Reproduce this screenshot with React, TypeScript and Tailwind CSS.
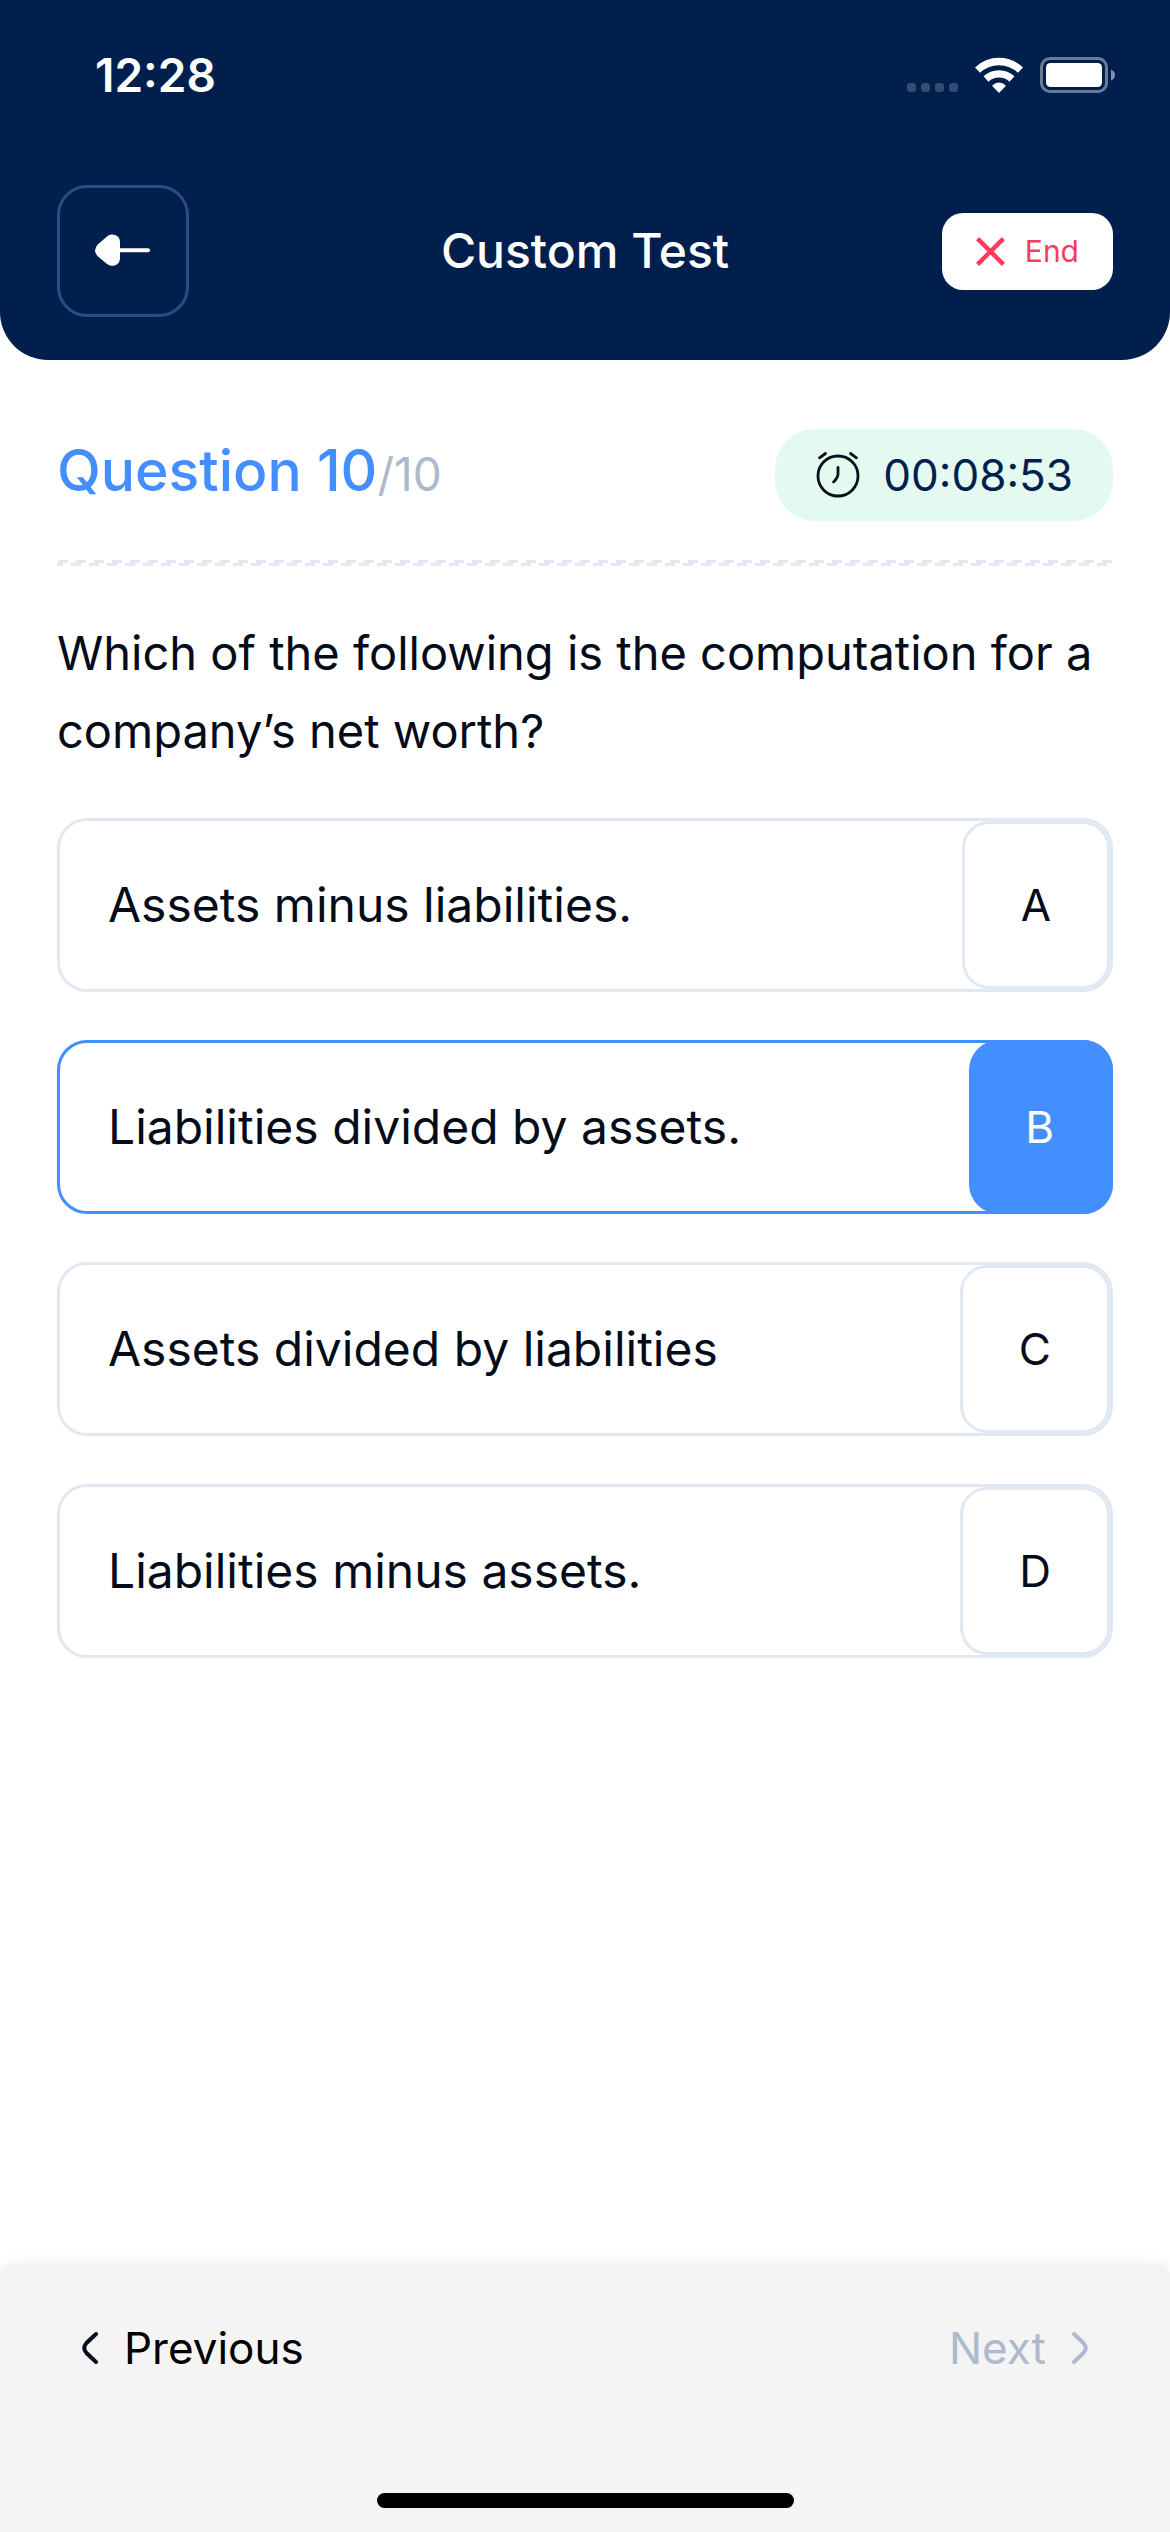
import React, { useState } from 'react';

const options = [
  { letter: 'A', text: 'Assets minus liabilities.' },
  { letter: 'B', text: 'Liabilities divided by assets.' },
  { letter: 'C', text: 'Assets divided by liabilities' },
  { letter: 'D', text: 'Liabilities minus assets.' },
];

const StatusBar: React.FC = () => (
  <div className="flex h-[149px] items-center justify-between pl-[95px] pr-[55px]">
    <span className="text-[46px] leading-[56px] font-semibold">12:28</span>
    <div className="flex items-center gap-[17px]">
      <svg width="51" height="36" viewBox="0 0 51 36" fill="#334c70">
        <rect x="0" y="26" width="9" height="9" rx="3" />
        <rect x="14" y="26" width="9" height="9" rx="3" />
        <rect x="28" y="26" width="9" height="9" rx="3" />
        <rect x="42" y="26" width="9" height="9" rx="3" />
      </svg>
      <svg width="48" height="36" viewBox="0 0 48 36" fill="none" stroke="white">
        <path d="M2.5 13.2a31 31 0 0 1 43 0" strokeWidth="7.4" />
        <path d="M11 22a19 19 0 0 1 26 0" strokeWidth="7.2" />
        <path d="M24 36l-7-7.2q7-6.6 14 0z" fill="white" stroke="none" />
      </svg>
      <svg width="75" height="36" viewBox="0 0 75 36" fill="none">
        <rect x="1.5" y="1.5" width="65" height="33" rx="8.5" stroke="#687b97" strokeWidth="3" />
        <rect x="6" y="6" width="56" height="24" rx="4.5" fill="white" />
        <path d="M71 12.5q4 1.6 4 5.5t-4 5.5z" fill="#8090a7" />
      </svg>
    </div>
  </div>
);

const Header: React.FC = () => (
  <header className="rounded-b-[48px] bg-[#001f4c] pb-[43px] text-white">
    <StatusBar />
    <div className="mt-9 grid grid-cols-[1fr_auto_1fr] items-center px-[57px]">
      <button
        type="button"
        aria-label="Back"
        className="flex size-[132px] items-center justify-center rounded-[30px] border-[3px] border-[#2d4b80]"
      >
        <svg width="58" height="34" viewBox="0 0 58 34" fill="white">
          <path d="M13 2.4C18 -1.4 26 .8 26 8.5V24C26 31.5 18 33.8 13 30L4 22.6Q-2 16.5 4 10.2z" />
          <path d="M25 16.2H54" stroke="white" strokeWidth="4" strokeLinecap="round" />
        </svg>
      </button>
      <h1 className="text-[48px] leading-[60px] font-medium">Custom Test</h1>
      <button
        type="button"
        className="flex h-[77px] items-center gap-5 justify-self-end rounded-[21px] bg-white px-[34px] text-[30px] text-[#f93c5c]"
      >
        <svg width="29" height="29" viewBox="0 0 29 29" fill="none" stroke="currentColor" strokeWidth="4.4">
          <path d="M1.6 1.6L27.4 27.4M27.4 1.6L1.6 27.4" />
        </svg>
        End
      </button>
    </div>
  </header>
);

const Timer: React.FC = () => (
  <div className="flex h-[92px] items-center gap-[22px] rounded-[40px] bg-[#e4f9f0] px-10 text-[44px] text-[#001f4c]">
    <svg width="46" height="48" viewBox="0 0 46 48" fill="none" stroke="#06101c" strokeWidth="2.8" strokeLinecap="round">
      <circle cx="23" cy="25" r="20" />
      <path d="M23 16.5V23q0 3.6-4.4 8" />
      <path d="M4.5 6.8L10.5 2.5M41.5 6.8L35.5 2.5" />
    </svg>
    <time>00:08:53</time>
  </div>
);

// two rows of short dashes, shifted against each other
const Divider: React.FC = () => (
  <div className="mt-[39px]">
    <div className="h-[3px] bg-[repeating-linear-gradient(90deg,transparent_0_1px,#e1e8f2_1px_11px,transparent_11px_18px)]" />
    <div className="h-[3px] bg-[repeating-linear-gradient(90deg,#e1e8f2_0_6px,transparent_6px_14px,#e1e8f2_14px_18px)]" />
  </div>
);

const App: React.FC = () => {
  const [selected, setSelected] = useState('B');

  return (
    <div className="flex min-h-screen flex-col bg-white font-['Inter',sans-serif] text-[#030c18]">
      <Header />

      <main className="flex-1 px-[57px] pt-[69px]">
        <div className="flex items-start justify-between">
          <h2 className="text-[57px] leading-[84px] font-medium text-[#448fff]">
            Question 10<span className="text-[46px] font-normal text-[#adbacd]">/10</span>
          </h2>
          <Timer />
        </div>

        <Divider />

        <fieldset className="mt-12">
          <legend className="text-[47px] leading-[78px]">
            Which of the following is the computation for a company’s net worth?
          </legend>
          <div className="mt-12 flex flex-col gap-12">
            {options.map(({ letter, text }) => {
              const active = letter === selected;
              return (
                <label
                  key={letter}
                  className={`relative flex h-[174px] cursor-pointer items-center justify-between rounded-[30px] border-[3px] pl-12 ${
                    active ? 'border-[#448fff]' : 'border-[#e1e8f2]'
                  }`}
                >
                  <input
                    type="radio"
                    name="answer"
                    value={letter}
                    checked={active}
                    onChange={() => setSelected(letter)}
                    className="sr-only"
                  />
                  <span className="text-[48px] leading-[60px]">{text}</span>
                  <span
                    className={`flex items-center self-stretch pl-14 text-[44px] ${
                      active
                        ? '-my-[3px] -mr-[3px] rounded-[30px] bg-[#448fff] pr-[59px] text-white'
                        : 'rounded-[27px] border-[3px] border-[#e1e8f2] pr-14'
                    }`}
                  >
                    {letter}
                  </span>
                </label>
              );
            })}
          </div>
        </fieldset>
      </main>

      <footer className="rounded-t-xl bg-[#f4f4f4] px-20 pb-6 shadow-[0_-2px_14px_rgba(0,0,0,0.05)]">
        <div className="flex items-center justify-between pt-[54px] text-[44px] leading-[60px]">
          <button type="button" className="flex items-center gap-6 text-black">
            <svg width="20" height="34" viewBox="0 0 20 34" fill="none" stroke="#06101c" strokeWidth="4" strokeLinecap="round">
              <path d="M16 3L6.5 12Q2 17 6.5 22L16 31" />
            </svg>
            Previous
          </button>
          <button type="button" className="flex items-center gap-6 text-[#adbacd]">
            Next
            <svg width="20" height="34" viewBox="0 0 20 34" fill="none" stroke="currentColor" strokeWidth="4" strokeLinecap="round">
              <path d="M4 3L13.5 12Q18 17 13.5 22L4 31" />
            </svg>
          </button>
        </div>
        <div className="mx-auto mt-[115px] h-[15px] w-[417px] rounded-full bg-black" />
      </footer>
    </div>
  );
};

export default App;
